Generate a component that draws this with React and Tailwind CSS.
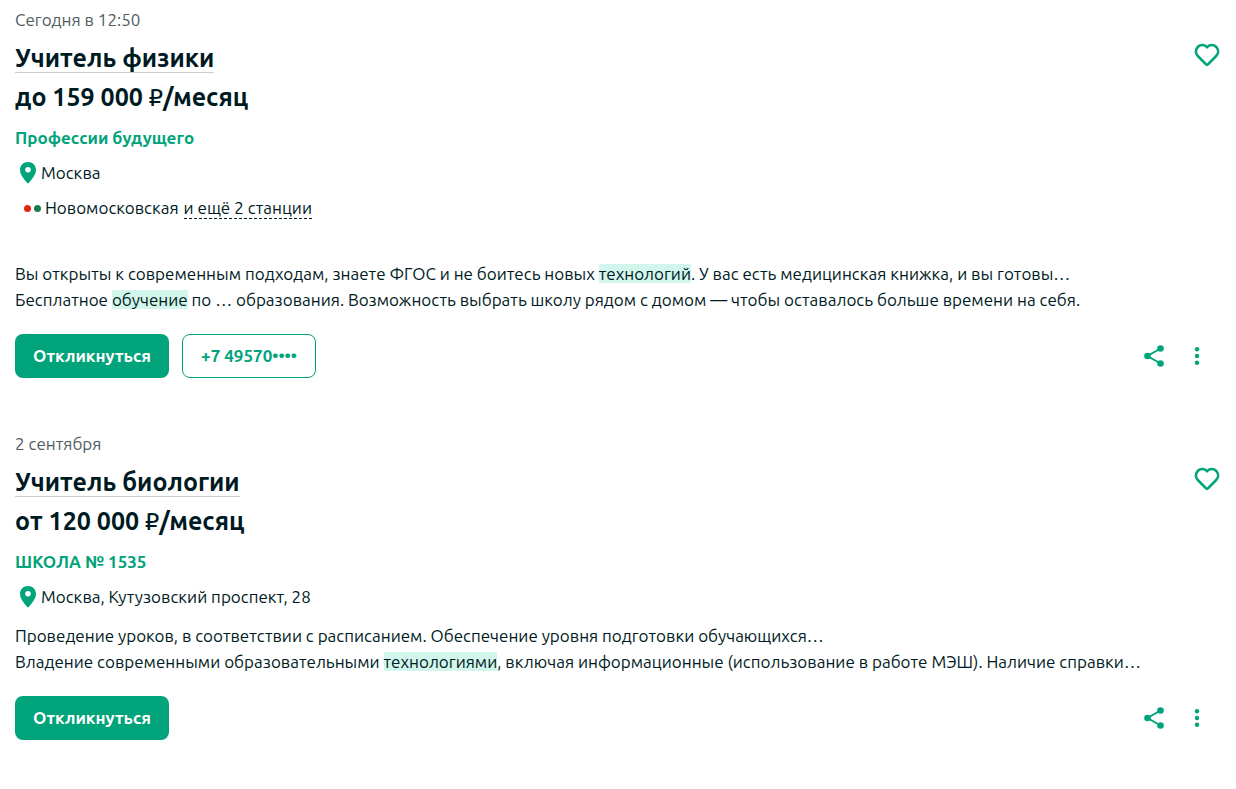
import React, { useState } from 'react';
import clsx from 'clsx';

const vacancies = [
    {
        id: 1,
        date: 'Сегодня в 12:50',
        title: 'Учитель физики',
        salary: 'до 159 000',
        company: 'Профессии будущего',
        address: 'Москва',
        metro: { name: 'Новомосковская', more: 'и ещё 2 станции' },
        phone: '+7 49570••••',
        description: [
            ['Вы открыты к современным подходам, знаете ФГОС и не боитесь новых ', 'технологий', '. У вас есть медицинская книжка, и вы готовы…'],
            ['Бесплатное ', 'обучение', ' по … образования. Возможность выбрать школу рядом с домом — чтобы оставалось больше времени на себя.'],
        ],
    },
    {
        id: 2,
        date: '2 сентября',
        title: 'Учитель биологии',
        salary: 'от 120 000',
        company: 'ШКОЛА № 1535',
        address: 'Москва, Кутузовский проспект, 28',
        description: [
            ['Проведение уроков, в соответствии с расписанием. Обеспечение уровня подготовки обучающихся…'],
            ['Владение современными образовательными ', 'технологиями', ', включая информационные (использование в работе МЭШ). Наличие справки…'],
        ],
    },
];

const HeartIcon = ({ filled }) => (
    <svg className="h-6 w-[26px]" viewBox="0 0 26 24" fill={filled ? 'currentColor' : 'none'} stroke="currentColor" strokeWidth="2.6" strokeLinejoin="round">
        <path d="M13 4.3C10.8 1.5 6.6 1.3 4 3.8C1.3 6.4 1.2 10.3 3.8 13L11.8 21.2C12.5 21.9 13.5 21.9 14.2 21.2L22.2 13C24.8 10.3 24.7 6.4 22 3.8C19.4 1.3 15.2 1.5 13 4.3Z" />
    </svg>
);

const PinIcon = () => (
    <svg className="h-[22px] w-4 shrink-0 text-[#00a37a]" viewBox="0 0 16 22" fill="currentColor">
        <path fillRule="evenodd" d="M8 0C3.4 0 0 3.4 0 7.8C0 12.6 4 17 7.2 21.1C7.6 21.6 8.4 21.6 8.8 21.1C12 17 16 12.6 16 7.8C16 3.4 12.6 0 8 0ZM8 4.9A2.8 2.8 0 1 1 8 10.5A2.8 2.8 0 0 1 8 4.9Z" />
    </svg>
);

const ShareIcon = () => (
    <svg className="h-[22px] w-5" viewBox="0 0 20 22" fill="currentColor">
        <path d="M16.5 3.5L3.5 11L16.5 18.5" fill="none" stroke="currentColor" strokeWidth="2" />
        <circle cx="16.5" cy="3.5" r="3.3" />
        <circle cx="3.5" cy="11" r="3.3" />
        <circle cx="16.5" cy="18.5" r="3.3" />
    </svg>
);

const DotsIcon = () => (
    <svg className="h-[18px] w-1" viewBox="0 0 4 18" fill="currentColor" overflow="visible">
        <circle cx="2" cy="2.3" r="2.2" />
        <circle cx="2" cy="9" r="2.2" />
        <circle cx="2" cy="15.7" r="2.2" />
    </svg>
);

const VacancyCard = ({ vacancy }) => {
    const [isFavorite, setFavorite] = useState(false);

    return (
        <article className="px-[15px] pt-2 pb-[46px]">
            <p className="leading-6 text-[#4f5d63]">{vacancy.date}</p>

            {/* Title and favorite */}
            <div className="mt-[7px] flex items-start justify-between">
                <h2 className="text-[25px] leading-[39px] font-semibold">
                    <a href="#" className="inline-block border-b border-[#c9ced0] leading-[28px]">{vacancy.title}</a>
                </h2>
                <button
                    type="button"
                    aria-label="В избранное"
                    className="mt-1 mr-px cursor-pointer text-[#00a37a]"
                    onClick={() => setFavorite(!isFavorite)}
                >
                    <HeartIcon filled={isFavorite} />
                </button>
            </div>
            <p className="text-[25px] leading-[39px] font-semibold">
                {vacancy.salary} <span className="font-medium">₽</span>/месяц
            </p>

            <a href="#" className="mt-2 inline-block font-semibold text-[#00a37a]">{vacancy.company}</a>

            {/* Location */}
            <div className="mt-[9px] flex items-center gap-[5px] pl-[5px]">
                <PinIcon />
                <span>{vacancy.address}</span>
            </div>
            {vacancy.metro && (
                <div className="mt-[9px] flex items-center pl-[9px]">
                    <span className="mr-[3px] h-[7px] w-[7px] rounded-full bg-[#e42313]" />
                    <span className="mr-1 h-[7px] w-[7px] rounded-full bg-[#1b7a48]" />
                    <span className="mr-[5px]">{vacancy.metro.name}</span>
                    <button type="button" className="cursor-pointer border-b border-dashed border-[#001a23] leading-5">
                        {vacancy.metro.more}
                    </button>
                </div>
            )}

            {/* Every second chunk of a line is a search match */}
            <div className={clsx(vacancy.metro ? 'mt-10' : 'mt-[13px]')}>
                {vacancy.description.map((line, i) => (
                    <p key={i} className="truncate">
                        {line.map((chunk, j) =>
                            j % 2 ? <mark key={j} className="bg-[#d2f6eb] text-inherit">{chunk}</mark> : chunk
                        )}
                    </p>
                ))}
            </div>

            {/* Actions */}
            <div className="mt-[21px] flex items-center justify-between">
                <div className="flex gap-[13px] font-semibold">
                    <button type="button" className="h-11 w-[154px] cursor-pointer rounded-lg bg-[#00a37a] text-white">
                        Откликнуться
                    </button>
                    {vacancy.phone && (
                        <button type="button" className="h-11 w-[134px] cursor-pointer rounded-lg border border-[#00a37a] text-[#00a37a]">
                            {vacancy.phone}
                        </button>
                    )}
                </div>
                <div className="mr-[22px] flex items-center gap-[31px] text-[#00a37a]">
                    <button type="button" aria-label="Поделиться" className="cursor-pointer">
                        <ShareIcon />
                    </button>
                    <button type="button" aria-label="Ещё" className="cursor-pointer">
                        <DotsIcon />
                    </button>
                </div>
            </div>
        </article>
    );
};

const App = () => {
    return (
        <main className="bg-white font-[Ubuntu,'Noto_Sans',sans-serif] text-[17px] leading-[26px] text-[#001a23]">
            {vacancies.map((vacancy) => (
                <VacancyCard key={vacancy.id} vacancy={vacancy} />
            ))}
        </main>
    );
};

export default App;
